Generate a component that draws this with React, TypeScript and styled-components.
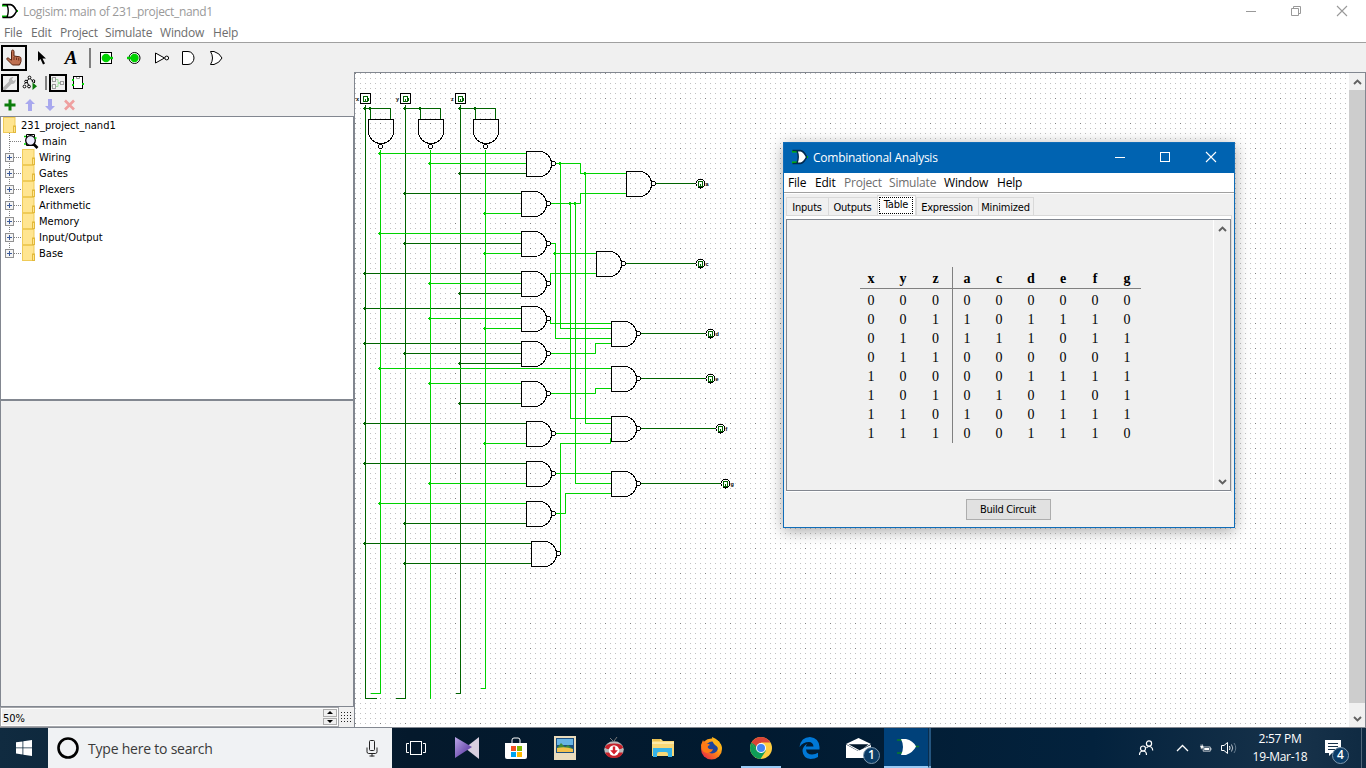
import React from 'react';
import styled, { createGlobalStyle } from 'styled-components';

const GlobalStyle = createGlobalStyle`
  * { box-sizing: border-box; }
  html, body { margin: 0; padding: 0; overflow: hidden; }
  svg { display: block; }
`;

const segoe = `'Open Sans', 'Noto Sans', sans-serif`;
const tahoma = `'DejaVu Sans Condensed', 'DejaVu Sans', sans-serif`;

const ON = '#00d200';
const OFF = '#006400';

/* ---------- main window frame ---------- */

const Screen = styled.div`
  position: relative;
  width: 1366px;
  height: 768px;
  display: flex;
  flex-direction: column;
  background: #fff;
  font-family: ${segoe};
  overflow: hidden;
`;

const TitleBar = styled.header`
  height: 24px;
  display: flex;
  align-items: center;
  background: #fff;
  color: #999;
  font-size: 12px;
  padding: 0 1px 2px 0;
`;

const TitleIcon = styled.span`
  width: 23px;
  padding-left: 1px;
`;

const TitleText = styled.span<{ $spacing: number }>`
  flex: 1;
  letter-spacing: ${(p) => p.$spacing}px;
  white-space: nowrap;
`;

const MenuBar = styled.nav<{ $height: number; $pad: number; $color: string }>`
  height: ${(p) => p.$height}px;
  padding-left: ${(p) => p.$pad}px;
  padding-bottom: 1px;
  display: flex;
  align-items: center;
  background: #fff;
  color: ${(p) => p.$color};
  border-bottom: 1px solid #a0a0a0;
  font-size: 12px;
`;

const MenuItem = styled.span<{ $width: number; $disabled?: boolean; $spacing?: number }>`
  width: ${(p) => p.$width}px;
  white-space: nowrap;
  letter-spacing: ${(p) => p.$spacing ?? -0.2}px;
  color: ${(p) => (p.$disabled ? '#6d6d6d' : 'inherit')};
`;

const ToolBar = styled.div`
  height: 29px;
  display: flex;
  align-items: center;
  background: #f0f0f0;
`;

const ToolSlot = styled.div<{ $size: number; $selected?: boolean; $shift?: number }>`
  width: ${(p) => p.$size}px;
  height: ${(p) => p.$size}px;
  margin-left: ${(p) => p.$shift ?? 0}px;
  display: flex;
  align-items: center;
  justify-content: center;
  position: relative;
  &::before {
    content: '';
    display: ${(p) => (p.$selected ? 'block' : 'none')};
    position: absolute;
    inset: 1px;
    border: 2px solid #000;
  }
`;

const ToolSeparator = styled.div<{ $height: number; $left: number; $right: number }>`
  width: 2px;
  height: ${(p) => p.$height}px;
  margin: 0 ${(p) => p.$right}px 0 ${(p) => p.$left}px;
  background: #808080;
`;

const Body = styled.div`
  height: 655px;
  display: flex;
`;

const Side = styled.aside`
  width: 354px;
  display: flex;
  flex-direction: column;
  background: #f0f0f0;
`;

const SmallBar = styled.div<{ $height: number }>`
  height: ${(p) => p.$height}px;
  display: flex;
  align-items: center;
`;

const TreePane = styled.div`
  height: 286px;
  background: #fff;
  border: 1px solid #828790;
  border-bottom-width: 2px;
`;

const AttributePane = styled.div`
  height: 306px;
  border: 1px solid #828790;
  border-top: 0;
`;

const TreeRow = styled.div<{ $root?: boolean }>`
  height: 16px;
  display: flex;
  align-items: center;
  padding-left: ${(p) => (p.$root ? 2 : 4)}px;
  font-family: ${tahoma};
  font-size: 11px;
  color: #000;
`;

const TreeLabel = styled.span<{ $gap: number }>`
  margin-left: ${(p) => p.$gap}px;
  padding-top: 2px;
  letter-spacing: 0.03px;
  white-space: nowrap;
`;

const ZoomRow = styled.div`
  height: 20px;
  display: flex;
`;

const ZoomField = styled.div`
  width: 339px;
  height: 20px;
  display: flex;
  align-items: center;
  justify-content: space-between;
  border: 1px solid #a4a6aa;
  outline: 1px solid #fff;
  outline-offset: -2px;
  padding: 0 1px 0 2px;
  font-family: ${tahoma};
  font-size: 11px;
`;

const ZoomValue = styled.span`
  padding-top: 2px;
`;

const Spinner = styled.div`
  width: 14px;
  height: 16px;
  display: flex;
  flex-direction: column;
  gap: 1px;
`;

const SpinButton = styled.div`
  flex: 1;
  border: 1px solid #acacac;
  background: #f0f0f0;
  display: flex;
  align-items: center;
  justify-content: center;
`;

const Grip = styled.div`
  margin: 5px 0 0 2px;
  width: 12px;
  height: 12px;
  background: linear-gradient(90deg, #222 1px, transparent 1px) 0 0 / 3px 3px;
  mask: linear-gradient(#000 1px, transparent 1px) 0 0 / 3px 3px;
`;

const CanvasPane = styled.main`
  flex: 1;
  display: flex;
  border: 1px solid #828790;
  border-bottom: 0;
  background: #fff;
`;

const Scroll = styled.div<{ $width: number; $edge?: boolean }>`
  width: ${(p) => p.$width}px;
  display: flex;
  flex-direction: column;
  align-items: stretch;
  justify-content: space-between;
  background: #f0f0f0;
  border-left: ${(p) => (p.$edge ? '1px solid #fff' : '0')};
`;

const ScrollArrow = styled.div`
  height: 17px;
  display: flex;
  align-items: center;
  justify-content: center;
`;

const ScrollThumb = styled.div`
  flex: 1;
  background: #cdcdcd;
  margin-bottom: 7px;
`;

const WindowEdge = styled.div`
  height: 1px;
  background: #828790;
`;

/* ---------- dialog ---------- */

const Dialog = styled.section`
  position: absolute;
  left: 783px;
  top: 142px;
  width: 452px;
  height: 386px;
  display: flex;
  flex-direction: column;
  background: #f0f0f0;
  border: 1px solid #0f6cb8;
  box-shadow: 0 3px 14px rgba(0, 0, 0, 0.36);
`;

const DialogTitle = styled.header`
  height: 30px;
  display: flex;
  align-items: center;
  background: #0063b1;
  color: #fff;
  font-size: 12px;
  padding: 0 0 2px 6px;
`;

const DialogIcon = styled.span`
  width: 23px;
  padding-left: 1px;
`;

const Tabs = styled.div`
  height: 22px;
  padding: 0 0 0 2px;
  display: flex;
  align-items: flex-end;
  border-top: 1px solid #fff;
`;

const Tab = styled.div<{ $width: number; $active?: boolean }>`
  width: ${(p) => p.$width}px;
  height: ${(p) => (p.$active ? 20 : 18)}px;
  display: flex;
  align-items: center;
  justify-content: center;
  font-family: ${tahoma};
  font-size: 11px;
  letter-spacing: -0.2px;
  white-space: nowrap;
  padding-top: ${(p) => (p.$active ? 0 : 2)}px;
  padding-right: 1px;
  background: ${(p) => (p.$active ? '#fff' : '#f0f0f0')};
  border: 1px solid #d9d9d9;
  border-bottom: 0;
  margin-right: ${(p) => (p.$active ? 0 : -1)}px;
`;

const TabFocus = styled.span`
  border: 1px dotted #000;
  width: 34px;
  height: 17px;
  line-height: 14px;
  text-align: center;
`;

const TabBody = styled.div`
  height: 277px;
  margin: 0 2px 0 2px;
  border: 1px solid #d9d9d9;
  border-width: 1px 1px 0 0;
  background: #fff;
  padding: 3px 0 1px 0;
  display: flex;
`;

const TableScroll = styled.div`
  flex: 1;
  display: flex;
  border: 1px solid #828790;
  background: #f0f0f0;
`;

const TruthTable = styled.div`
  flex: 1;
  display: flex;
  align-items: flex-start;
  padding: 47px 0 0 68px;
  font-family: 'Liberation Serif', serif;
  font-size: 14px;
  color: #000;
`;

const TableHalf = styled.div<{ $outputs?: boolean }>`
  display: flex;
  flex-direction: column;
  height: 176px;
  border-left: ${(p) => (p.$outputs ? '1px solid #808080' : '0')};
`;

const TableLine = styled.div<{ $head?: boolean; $outputs?: boolean }>`
  display: grid;
  grid-template-columns: ${(p) => (p.$outputs ? '30px repeat(5, 32px)' : '32px 32px 33px')};
  height: ${(p) => (p.$head ? 21 : 19)}px;
  padding-top: ${(p) => (p.$head ? 2 : 0)}px;
  align-items: center;
  font-weight: ${(p) => (p.$head ? 700 : 400)};
`;

const TableCell = styled.span<{ $nudge?: boolean }>`
  text-align: center;
  padding-right: ${(p) => (p.$nudge ? 2 : 0)}px;
`;

const TableRule = styled.div<{ $outputs?: boolean }>`
  height: 1px;
  background: #808080;
  margin: ${(p) => (p.$outputs ? '0 2px 2px 0' : '0 0 2px 5px')};
`;

const ButtonRow = styled.div`
  flex: 1;
  display: flex;
  align-items: center;
  justify-content: center;
`;

const PushButton = styled.div`
  width: 85px;
  height: 21px;
  border: 1px solid #adadad;
  background: #e1e1e1;
  font-family: ${tahoma};
  font-size: 11px;
  line-height: 19px;
  text-align: center;
  letter-spacing: -0.3px;
  margin: 0 2px 0 0;
`;

/* ---------- taskbar ---------- */

const TaskBar = styled.footer`
  height: 40px;
  display: flex;
  background: linear-gradient(90deg, #102b40 0, #04192c 30%, #011a30 55%, #03223d 80%, #17324a 95%, #0f2a42 100%);
  color: #fff;
`;

const StartButton = styled.div`
  width: 48px;
  display: flex;
  align-items: center;
  justify-content: center;
`;

const SearchBox = styled.div`
  width: 344px;
  display: flex;
  align-items: center;
  background: #f0f2f4;
  color: #3a3a3a;
  font-size: 14px;
  padding: 0 14px 0 8px;
`;

const SearchText = styled.span`
  flex: 1;
  margin-left: 8px;
  letter-spacing: -0.22px;
`;

const TaskView = styled.div`
  width: 50px;
  display: flex;
  align-items: center;
  padding-left: 14px;
`;

const TaskSlot = styled.div<{ $mark?: boolean }>`
  width: 49px;
  display: flex;
  align-items: center;
  justify-content: center;
  position: relative;
  &::after {
    content: '';
    display: ${(p) => (p.$mark ? 'block' : 'none')};
    position: absolute;
    left: 5px;
    right: 4px;
    bottom: 0;
    height: 2px;
    background: #99caf5;
  }
`;

const ActiveTask = styled.div`
  width: 44px;
  margin-left: 1px;
  padding-left: 4px;
  display: flex;
  align-items: center;
  justify-content: center;
  background: #00417a;
  border-bottom: 2px solid #99caf5;
`;

const StackedTask = styled.div`
  width: 3px;
  background: #24557f;
  border-left: 1px solid #0a2d4d;
  border-bottom: 2px solid #7ba8cf;
`;

const Badge = styled.span<{ $left: number; $top: number }>`
  position: absolute;
  left: ${(p) => p.$left}px;
  top: ${(p) => p.$top}px;
  width: 17px;
  height: 17px;
  border-radius: 50%;
  border: 1px solid #7f98ad;
  background: #0c3c66;
  color: #fff;
  font-size: 12px;
  font-weight: 600;
  line-height: 14px;
  text-align: center;
`;

const Tray = styled.div`
  flex: 1;
  display: flex;
  align-items: center;
  justify-content: flex-end;
`;

const TrayIcon = styled.span<{ $width: number }>`
  width: ${(p) => p.$width}px;
  display: flex;
  align-items: center;
  justify-content: center;
  position: relative;
`;

const ActionCenter = styled.span`
  width: 47px;
  padding-left: 11px;
  position: relative;
`;

const Clock = styled.div`
  width: 68px;
  font-size: 12px;
  line-height: 18px;
  text-align: center;
  letter-spacing: -0.3px;
  white-space: nowrap;
`;

const ShowDesktop = styled.div`
  width: 5px;
  height: 40px;
  border-left: 1px solid #51677a;
`;

/* ---------- icons ---------- */

const OrLogo = ({ fill, stroke }: { fill: string; stroke: string }) => (
  <svg width="18" height="16" viewBox="0 0 18 16">
    <path d="M1 2.500h6M1 13.500h6M14 8h3" stroke="#00c000" strokeWidth="1.800" />
    <path d="M1.500 1.500h8c3 .5 4.500 3 6 6.500-1.500 3.500-3 6-6 6.500h-8" fill="none" stroke={stroke} strokeWidth="1.300" />
    <path d="M6 1.800h3.500c3 .5 4.500 3 6 6.200-1.500 3.200-3 5.700-6 6.200H6Q8.500 8 6 1.800z" fill={fill} stroke={stroke} strokeWidth="1.400" />
  </svg>
);

const MinIcon = ({ color }: { color: string }) => (
  <svg width="46" height="12" viewBox="0 0 46 12"><path d="M19 6.500h10" stroke={color} /></svg>
);
const MaxIcon = ({ color }: { color: string }) => (
  <svg width="46" height="12" viewBox="0 0 46 12"><rect x="18.500" y="1.500" width="9" height="9" fill="none" stroke={color} /></svg>
);
const RestoreIcon = ({ color }: { color: string }) => (
  <svg width="46" height="12" viewBox="0 0 46 12"><path d="M18.500 3.500h7v7h-7zM20.500 3v-1.500h7v7h-1.500" fill="none" stroke={color} /></svg>
);
const CloseIcon = ({ color }: { color: string }) => (
  <svg width="46" height="12" viewBox="0 0 46 12"><path d="M18 1l10 10M28 1L18 11" stroke={color} strokeWidth="1.100" /></svg>
);

const PokeIcon = () => (
  <svg width="18" height="18" viewBox="0 0 18 18">
    <path d="M6.500 9V2.500q0-1.500 1.200-1.500t1.300 1.500V7l5.500.8q1.500.3 1.500 1.800v2.900l-1.500 3.500H7.500L2 10.500q-.7-1.500.8-1.600 1 0 2 1.300l1.700 1z" fill="#c07050" stroke="#5a2410" />
    <path d="M9 8v3M11.500 8.500v2.500M13.700 9v2.500" stroke="#5a2410" strokeWidth=".8" />
  </svg>
);
const ArrowIcon = () => (
  <svg width="12" height="16" viewBox="0 0 12 16"><path d="M2 1v10.500l2.500-2.500 2.500 5.500 2-1-2.500-5H10z" fill="#000" /></svg>
);
const TextToolIcon = styled.span`
  font: italic bold 19px 'Liberation Serif', serif;
  color: #000;
  margin-left: 2px;
`;
const InPinIcon = () => (
  <svg width="16" height="14" viewBox="0 0 16 14">
    <rect x="2.500" y="1.500" width="11" height="11" fill="#fff" stroke="#000" />
    <circle cx="8" cy="7" r="4.300" fill={ON} /><path d="M11 7h4" stroke={ON} strokeWidth="2.400" />
  </svg>
);
const OutPinIcon = () => (
  <svg width="16" height="14" viewBox="0 0 16 14">
    <circle cx="8.500" cy="7" r="5.500" fill="#fff" stroke="#000" />
    <circle cx="8.500" cy="7" r="4.200" fill={ON} /><path d="M1 7h4" stroke={ON} strokeWidth="2.400" />
  </svg>
);
const NotIcon = () => (
  <svg width="16" height="14" viewBox="0 0 16 14">
    <path d="M1.500 2v10l9-5z" fill="#fff" stroke="#000" /><circle cx="12.700" cy="7" r="1.900" fill="#fff" stroke="#000" />
  </svg>
);
const AndIcon = () => (
  <svg width="16" height="14" viewBox="0 0 16 14"><path d="M2.500 .5v13H8a6 6.500 0 0 0 0-13z" fill="#fff" stroke="#000" /></svg>
);
const OrIcon = () => (
  <svg width="16" height="14" viewBox="0 0 16 14"><path d="M2.500 .5h3.500Q11.500 2 14 7 11.500 12 6 13.500H2.500Q6.500 7 2.500 .5z" fill="#fff" stroke="#000" /></svg>
);

const WrenchIcon = () => (
  <svg width="14" height="14" viewBox="0 0 14 14">
    <path d="M1.500 12.500L7 7" stroke="#b4b4b4" strokeWidth="3.600" strokeLinecap="round" />
    <path d="M13 3.500l-2.500 1.500-1.700-1.700L10.500 1Q7 .5 6 3.500T8.500 8q3.500.5 4.500-4.500z" fill="#b4b4b4" />
  </svg>
);
const SimTreeIcon = () => (
  <svg width="16" height="16" viewBox="0 0 16 16">
    <path d="M7.500 3L2.500 9M7.500 3L13 8M5 6.500l2 5" stroke="#000" fill="none" />
    <g fill="#fff" stroke="#000"><circle cx="7.500" cy="2.500" r="1.400" /><circle cx="4" cy="6.500" r="1.300" /><circle cx="2.500" cy="11.500" r="1.400" /><circle cx="7" cy="11.500" r="1.400" /><circle cx="11.500" cy="6" r="1.300" /></g>
    <path d="M10.500 7.500v7.500l4.500-3.800z" fill="#0a7a0a" />
  </svg>
);
const LayoutIcon = () => (
  <svg width="14" height="14" viewBox="0 0 14 14">
    <path d="M4 3.500h3v3h2M4 10.500h3v-3h2M11 7h2M0 3h1M0 10h1" stroke="#a0dca0" fill="none" />
    <g fill="#f4f4f4" stroke="#9c9c9c"><rect x="1.500" y="1.500" width="3" height="4" /><rect x="1.500" y="8.500" width="3" height="4" /><rect x="9.500" y="5.500" width="3" height="3" /></g>
  </svg>
);
const AppearanceIcon = () => (
  <svg width="14" height="15" viewBox="0 0 14 15">
    <rect x="2.500" y="1.500" width="9" height="12" fill="#fff" stroke="#000" />
    <path d="M5.500 2v1.500h3V2" stroke="#999" fill="none" />
    <path d="M1 5h2M1 10h2M11 9h2" stroke={ON} strokeWidth="2" />
  </svg>
);
const PlusIcon = () => (
  <svg width="12" height="12" viewBox="0 0 12 12"><path d="M4.500 .5h3v4h4v3h-4v4h-3v-4h-4v-3h4z" fill="#0b7d0b" /></svg>
);
const UpIcon = ({ flip }: { flip?: boolean }) => (
  <svg width="10" height="12" viewBox="0 0 10 12"><path d={flip ? 'M5 12L0 7h3V0h4v7h3z' : 'M5 0L0 5h3v7h4V5h3z'} fill="#a8a8ee" /></svg>
);
const CrossIcon = () => (
  <svg width="12" height="12" viewBox="0 0 12 12"><path d="M1 1.500l9 9M10 1.500l-9 9" stroke="#efa0a0" strokeWidth="2.600" /></svg>
);

const FolderIcon = () => (
  <svg width="14" height="16" viewBox="0 0 14 16">
    <rect x=".5" y=".5" width="11.500" height="15" fill="#ffe591" stroke="#efcb58" />
    <rect x="10.500" y="9" width="2" height="6.500" fill="#ffe591" stroke="#e2b93c" />
  </svg>
);
const CircuitIcon = () => (
  <svg width="17" height="16" viewBox="-1 0 17 16">
    <path d="M3.500 1.500h8v11h-8z" fill="#fff" stroke="#000" />
    <circle cx="7.500" cy="7.500" r="4.800" fill="#ecebff" stroke="#000" strokeWidth="1.300" />
    <path d="M10.500 11l4 4" stroke="#000" strokeWidth="2.600" />
    <path d="M1 3.500h2M1 11h2M11.500 5h2" stroke={ON} strokeWidth="1.500" />
  </svg>
);
const TreeBranch = ({ leaf, last }: { leaf?: boolean; last?: boolean }) => (
  <svg width="17" height="16" viewBox="0 0 17 16" shapeRendering="crispEdges">
    <path d={last ? 'M4.500 0v8' : 'M4.500 0v16'} stroke="#808080" strokeDasharray="1 1" />
    <path d="M5 8.500h11" stroke="#808080" strokeDasharray="1 1" />
    {!leaf && <><rect x=".5" y="4.500" width="8" height="8" fill="#f4f4f4" stroke="#919191" /><path d="M2 8.500h5M4.500 6v5" stroke="#3b5a9a" /></>}
  </svg>
);

const Chevron = ({ up }: { up?: boolean }) => (
  <svg width="9" height="6" viewBox="0 0 9 6"><path d={up ? 'M1 5l3.500-3.500L8 5' : 'M1 1l3.500 3.500L8 1'} fill="none" stroke="#606060" strokeWidth="1.900" /></svg>
);
const Caret = ({ up }: { up?: boolean }) => (
  <svg width="6" height="3" viewBox="0 0 6 3"><path d={up ? 'M0 3l3-3 3 3z' : 'M0 0l3 3 3-3z'} fill="#000" /></svg>
);

/* ---------- circuit ---------- */

const firstGates: [number, number][] = [
  [526, 163], [521, 203], [521, 243], [521, 283], [521, 318], [521, 353],
  [521, 393], [526, 433], [526, 473], [526, 513], [531, 553],
];
const secondGates: [number, number][] = [[626, 183], [596, 263], [611, 333], [611, 378], [611, 428], [611, 483]];

// bus x, gate x, y, high level
const taps: [number, number, number, boolean][] = [
  [380, 526, 153, true], [430, 526, 163, true], [460, 526, 173, false],
  [405, 521, 193, false], [485, 521, 213, true],
  [380, 521, 233, true], [405, 521, 243, false], [485, 521, 253, true],
  [365, 521, 273, false], [430, 521, 283, true], [460, 521, 293, false],
  [365, 521, 308, false], [430, 521, 318, true], [485, 521, 328, true],
  [365, 521, 343, false], [405, 521, 353, false], [460, 521, 363, false],
  [380, 611, 368, true], [430, 521, 383, true], [460, 521, 403, false],
  [365, 526, 423, false], [485, 526, 443, true],
  [365, 526, 463, false], [430, 526, 483, true],
  [380, 526, 503, true], [405, 526, 523, false],
  [365, 531, 543, false], [405, 531, 563, false],
];
const highWires = [
  'M380 149V693H370', 'M430 149V698', 'M485 149V688H480',
  'M554 163H580V173H626', 'M549 203H580V193H626', 'M560 163V328H611', 'M585 173V423H611',
  'M570 203V418H611', 'M575 203V483H611', 'M549 243H555V338H611', 'M555 253H596',
  'M550 283V273H596', 'M550 318V323H611', 'M549 353H595V343H611', 'M549 393H595V388H611',
  'M554 433H611', 'M554 473H611', 'M554 513H565V493H611', 'M560 553V443H610V438H609',
];
const lowWires = [
  'M365 104V698H376', 'M405 104V698H395', 'M460 104V693H455',
  'M365 108H390V119M370 108V119', 'M405 108H440V119M420 108V119', 'M460 108H495V119M475 108V119',
  'M654 183H696', 'M624 263H696', 'M639 333H706', 'M639 378H706', 'M639 428H716', 'M639 483H721',
];
const nodes: [number, number, boolean][] = [
  [560, 163, true], [585, 173, true], [570, 203, true], [575, 203, true], [555, 253, true],
  [365, 108, false], [370, 108, false], [405, 108, false], [420, 108, false], [460, 108, false], [475, 108, false],
  ...taps.map(([x, , y, h]) => [x, y, h] as [number, number, boolean]),
];
const inputPins: [number, string][] = [[365, 'x'], [405, 'y'], [460, 'z']];
const outputPins: [number, number, string][] = [
  [700, 183, 'a'], [700, 263, 'c'], [710, 333, 'd'], [710, 378, 'e'], [720, 428, 'f'], [725, 483, 'g'],
];

const PinLabel = styled.text`
  font: bold 5.5px 'Liberation Sans', sans-serif;
  fill: #000;
`;

const Circuit = () => (
  <svg width="994" height="654" viewBox="355 73 994 654">
    <defs>
      <pattern id="minor" x="355" y="73" width="5" height="5" patternUnits="userSpaceOnUse"><rect width="1" height="1" fill="#c0c0c0" /></pattern>
      <pattern id="major" x="355" y="73" width="25" height="25" patternUnits="userSpaceOnUse"><rect width="1" height="1" fill="#808080" /></pattern>
    </defs>
    <rect x="355" y="73" width="994" height="654" fill="#fff" />
    <rect x="355" y="73" width="994" height="654" fill="url(#minor)" />
    <rect x="355" y="73" width="994" height="654" fill="url(#major)" />
    <g transform="translate(.5 .5)" fill="none" shapeRendering="crispEdges">
      <g stroke={OFF}>
        {lowWires.map((d) => <path key={d} d={d} />)}
        {taps.filter((t) => !t[3]).map(([x, g, y]) => <path key={`${x}-${y}`} d={`M${x} ${y}H${g}`} />)}
      </g>
      <g stroke={ON}>
        {highWires.map((d) => <path key={d} d={d} />)}
        {taps.filter((t) => t[3]).map(([x, g, y]) => <path key={`${x}-${y}`} d={`M${x} ${y}H${g}`} />)}
      </g>
    </g>
    <g shapeRendering="crispEdges">
      {nodes.map(([x, y, h]) => <path key={`${x}-${y}`} d={`M${x - 1} ${y - 1}h2v3h-2zM${x - 2} ${y}h4v1h-4z`} fill={h ? ON : OFF} />)}
    </g>
    <g transform="translate(.5 .5)" fill="none" shapeRendering="crispEdges">
      {[...firstGates, ...secondGates].map(([x, y]) => (
        <g key={`${x}-${y}`} transform={`translate(${x} ${y})`} stroke="#000">
          <path d="M0-12H13A12 12.500 0 0 1 13 13H0Z" />
          <circle cx="27" cy="0" r="2" />
        </g>
      ))}
      {[380, 430, 485].map((x) => (
        <g key={x} transform={`translate(${x} 119)`} stroke="#000">
          <path d="M-12 0H13V12A12.500 12 0 0 1-12 12Z" />
          <circle cx="0" cy="27" r="2" />
        </g>
      ))}
      {inputPins.map(([x]) => (
        <g key={x}>
          <rect x={x - 5} y="93" width="10" height="10" fill="#fff" stroke="#000" />
          <path d={`M${x - 2} 96h4v5h-4zM${x} 98v2M${x + 3} 97v3`} stroke={OFF} />
        </g>
      ))}
      {outputPins.map(([x, y]) => (
        <g key={`${x}-${y}`}>
          <circle cx={x} cy={y} r="4.500" fill="#fff" stroke="#000" />
          <path d={`M${x - 2} ${y - 2}h4v5h-4zM${x} ${y}v2`} stroke={OFF} />
        </g>
      ))}
    </g>
    {inputPins.map(([x, l]) => <PinLabel key={l} x={x - 9} y="101">{l}</PinLabel>)}
    {outputPins.map(([x, y, l]) => <PinLabel key={l} x={x + 5.500} y={y + 3}>{l}</PinLabel>)}
  </svg>
);

/* ---------- taskbar icons ---------- */

const WindowsLogo = () => (
  <svg width="16" height="16" viewBox="0 0 16 16" fill="#fff"><path d="M0 2.300L6.500 1.400v6.100H0zM7.300 1.300L16 0v7.500H7.300zM0 8.300h6.500v6.200L0 13.600zM7.300 8.300H16V16l-8.700-1.300z" /></svg>
);
const MicIcon = () => (
  <svg width="12" height="17" viewBox="0 0 12 17" fill="none" stroke="#222"><rect x="3.500" y=".5" width="5" height="10" rx="1" /><path d="M1 7.500v4.300q0 1.700 1.700 1.700h6.600q1.700 0 1.700-1.700V7.500M6 13.500v3M3.500 16h5" /></svg>
);
const CortanaIcon = () => (
  <svg width="24" height="24" viewBox="0 0 24 24"><circle cx="12" cy="12" r="9.500" fill="none" stroke="#000" strokeWidth="2.600" /></svg>
);
const TaskViewIcon = () => (
  <svg width="21" height="14" viewBox="0 0 21 14" fill="none" stroke="#fff"><rect x="4.500" y=".5" width="11" height="13" /><path d="M3 2.500H.5v9H3M17 2.500h2.500v9H17" /></svg>
);
const PlayerIcon = () => (
  <svg width="24" height="22" viewBox="0 0 24 22">
    <defs><linearGradient id="km" x1="0" y1="0" x2="1" y2="1"><stop offset="0" stopColor="#bba8e8" /><stop offset="1" stopColor="#4a2596" /></linearGradient></defs>
    <path d="M24 0v22L10 11z" fill="#d8cfdf" /><path d="M0 0l17 10L0 21z" fill="url(#km)" />
  </svg>
);
const StoreIcon = () => (
  <svg width="24" height="24" viewBox="0 0 24 24">
    <path d="M8 7V4q0-2 2-2h4q2 0 2 2v3" fill="none" stroke="#fff" /><path d="M1 7h22v14q0 2-2 2H3q-2 0-2-2z" fill="#fff" />
    <path d="M7 10h5v5H7z" fill="#f25022" /><path d="M13 10h5v5h-5z" fill="#7fba00" /><path d="M7 16h5v5H7z" fill="#00a4ef" /><path d="M13 16h5v5h-5z" fill="#ffb900" />
  </svg>
);
const PictureIcon = () => (
  <svg width="22" height="24" viewBox="0 0 22 24">
    <rect width="22" height="24" fill="#eadcbc" /><rect x="2" y="2" width="18" height="15" fill="#1c4f80" /><rect x="3" y="3" width="16" height="6" fill="#68b4e4" />
    <path d="M3 12l4-5 4 4 3-2 5 4v3H3z" fill="#3f8a3c" /><path d="M3 12q8-2 16 1v3H3z" fill="#f2c14c" />
  </svg>
);
const DownloaderIcon = () => (
  <svg width="20" height="22" viewBox="0 0 20 22">
    <path d="M6 1l3 3M13 0l-3 4" stroke="#777" />
    <ellipse cx="10" cy="12.500" rx="9.800" ry="8.300" fill="#b9b9bb" />
    <path d="M.8 10.500Q2 6.500 10 6.500t9.200 4L17 12H3z" fill="#c5222b" />
    <path d="M1 15.500h18Q17 21 10 21T1 15.500z" fill="#c5222b" />
    <circle cx="10" cy="13.500" r="5.200" fill="#fff" /><path d="M8.800 9.500h2.400v3.700h2.600L10 17.500l-3.800-4.300h2.600z" fill="#d41f2c" />
  </svg>
);
const ExplorerIcon = () => (
  <svg width="22" height="20" viewBox="0 0 22 20">
    <path d="M0 1h9l2 2h11v15H0z" fill="#f8d776" /><path d="M0 4h22v2H0z" fill="#fce9a8" /><path d="M1 2h7" stroke="#d9a62a" />
    <path d="M1 10h19v9h-4v-3q0-2-2-2H7q-2 0-2 2v3H1z" fill="#35b2e8" />
  </svg>
);
const FirefoxIcon = () => (
  <svg width="23" height="23" viewBox="0 0 23 23">
    <defs><linearGradient id="ff" x1="1" y1="0" x2="0" y2="1"><stop offset="0" stopColor="#ffe226" /><stop offset=".45" stopColor="#ff8a16" /><stop offset="1" stopColor="#e3164f" /></linearGradient></defs>
    <circle cx="11.500" cy="12" r="10.500" fill="url(#ff)" /><circle cx="12" cy="10.500" r="6" fill="#20449c" />
    <path d="M12 0q8 3 10 11l-4 4q1-5-3-7-3-3-3-8z" fill="#ffb31a" /><path d="M1 8l2-5 2 4q4-1 5 1-3 1-2 3 2 2 5 1-1 4-6 4-6-1-6-8z" fill="#ff7a16" />
  </svg>
);
const ChromeIcon = () => (
  <svg width="22" height="22" viewBox="0 0 22 22">
    <circle cx="11" cy="11" r="11" fill="#ffcd40" /><path d="M11 11L1.500 5.500A11 11 0 0 1 20.500 5.500H11z" fill="#db4437" /><path d="M1.500 5.500A11 11 0 0 0 10.500 22L16 13.500 6 13z" fill="#0f9d58" />
    <path d="M1.500 5.500L6.500 13.500 11 11V5.500z" fill="#db4437" /><path d="M1.500 5.500L6.300 13.700 8 12 5 8z" fill="#0f9d58" />
    <circle cx="11" cy="11" r="5" fill="#fff" /><circle cx="11" cy="11" r="4" fill="#4285f4" />
  </svg>
);
const EdgeIcon = () => (
  <svg width="21" height="22" viewBox="0 0 21 22"><path d="M.5 10Q2 0 11 0q9 1 9.500 10v2.500H7q.5 5 6 5 3.500 0 6-1.700V20q-3 2-7.500 2Q4 21 3.500 14q.2-5 5-7.500Q7 8 6.800 9.500h7.700Q14 5 10 5 4 5 .5 10z" fill="#0078d7" /></svg>
);
const MailIcon = () => (
  <svg width="25" height="20" viewBox="0 0 25 20"><path d="M0 6L12.500 0 25 6l-12.500 7z" fill="#fff" /><path d="M2.500 6.200h20l-8 6.500z" fill="#04192c" /><path d="M0 6.500L12 13l13-6v13H0z" fill="#fff" /></svg>
);
const TaskGateIcon = () => (
  <svg width="23" height="18" viewBox="0 0 23 18"><path d="M0 2h5M0 15h5M18 8.500h4" stroke="#0a7c28" strokeWidth="1.500" /><path d="M4 1h5q7 1.500 10 7.500-3 6-10 8.500H4Q8 9 4 1z" fill="#fff" /></svg>
);
const PeopleIcon = () => (
  <svg width="16" height="16" viewBox="0 0 16 16" fill="none" stroke="#fff" strokeWidth="1.200"><circle cx="11" cy="3.500" r="2.600" /><circle cx="5" cy="8.500" r="2.500" /><path d="M1.500 15q0-4 3.500-4t3.500 4M8.500 8q1-1.500 2.500-1.500 3.500 0 3.700 4" /></svg>
);
const TrayChevron = () => (
  <svg width="13" height="8" viewBox="0 0 13 8"><path d="M1 7l5.500-5.500L12 7" fill="none" stroke="#fff" strokeWidth="1.300" /></svg>
);
const BatteryIcon = () => (
  <svg width="17" height="12" viewBox="0 0 17 12"><path d="M4.500 4.500h10v6h-10z" fill="none" stroke="#fff" /><path d="M6 6h7v3H6z" fill="#fff" /><path d="M15.500 6v3M1.500 1v2M3.500 1v2M1 3.500h4M3 4v3h-2" stroke="#fff" /><path d="M.5 3h4v2l-1.500 1h-1L.5 5z" fill="#fff" /></svg>
);
const VolumeIcon = () => (
  <svg width="17" height="14" viewBox="0 0 17 14" fill="none" stroke="#fff"><path d="M.5 4.500h2.500L6.500 1.500v11L3 9.500H.5z" /><path d="M8.500 5q1 2 0 4" /><path d="M10.500 3.500q2.500 3.500 0 7" stroke="#b8c2cc" /><path d="M13 2q3.500 5 0 10" stroke="#62788b" /></svg>
);
const ActionIcon = () => (
  <svg width="16" height="16" viewBox="0 0 16 16"><path d="M0 0h16v13H7l-3 3v-3H0z" fill="#fff" /><path d="M3 3.500h10M3 6.500h10M3 9.500h7" stroke="#17324a" /></svg>
);

/* ---------- content ---------- */

const rows = [
  '000000000', '001101110', '010111011', '011000001',
  '100001111', '101010101', '110100111', '111001110',
];
const libraries = ['Wiring', 'Gates', 'Plexers', 'Arithmetic', 'Memory', 'Input/Output', 'Base'];

const TableBlock = ({ names, from, to, outputs }: { names: string[]; from: number; to: number; outputs?: boolean }) => (
  <TableHalf $outputs={outputs}>
    <TableLine $head $outputs={outputs}>
      {names.map((n, i) => <TableCell key={n} $nudge={outputs && i === 0}>{n}</TableCell>)}
    </TableLine>
    <TableRule $outputs={outputs} />
    {rows.map((r) => (
      <TableLine key={r} $outputs={outputs}>
        {r.slice(from, to).split('').map((v, i) => <TableCell key={i} $nudge={outputs && i === 0}>{v}</TableCell>)}
      </TableLine>
    ))}
  </TableHalf>
);

export default function App() {
  return (
    <Screen>
      <GlobalStyle />
      <TitleBar>
        <TitleIcon><OrLogo fill="#fff" stroke="#000" /></TitleIcon>
        <TitleText $spacing={-0.32}>Logisim: main of 231_project_nand1</TitleText>
        <MinIcon color="#999" /><RestoreIcon color="#999" /><CloseIcon color="#999" />
      </TitleBar>
      <MenuBar $height={19} $pad={4} $color="#6d6d6d">
        <MenuItem $width={27}>File</MenuItem>
        <MenuItem $width={29}>Edit</MenuItem>
        <MenuItem $width={45}>Project</MenuItem>
        <MenuItem $width={55}>Simulate</MenuItem>
        <MenuItem $width={53}>Window</MenuItem>
        <MenuItem $width={30}>Help</MenuItem>
      </MenuBar>
      <ToolBar>
        <ToolSlot $size={28} $selected><PokeIcon /></ToolSlot>
        <ToolSlot $size={28}><ArrowIcon /></ToolSlot>
        <ToolSlot $size={28}><TextToolIcon>A</TextToolIcon></ToolSlot>
        <ToolSeparator $height={20} $left={5} $right={1} />
        <ToolSlot $size={28}><InPinIcon /></ToolSlot>
        <ToolSlot $size={28}><OutPinIcon /></ToolSlot>
        <ToolSlot $size={28}><NotIcon /></ToolSlot>
        <ToolSlot $size={28} $shift={-2}><AndIcon /></ToolSlot>
        <ToolSlot $size={28}><OrIcon /></ToolSlot>
      </ToolBar>
      <Body>
        <Side>
          <SmallBar $height={22}>
            <ToolSlot $size={20} $selected><WrenchIcon /></ToolSlot>
            <ToolSlot $size={20}><SimTreeIcon /></ToolSlot>
            <ToolSeparator $height={14} $left={5} $right={1} />
            <ToolSlot $size={20} $selected><LayoutIcon /></ToolSlot>
            <ToolSlot $size={20}><AppearanceIcon /></ToolSlot>
          </SmallBar>
          <SmallBar $height={22}>
            <ToolSlot $size={20}><PlusIcon /></ToolSlot>
            <ToolSlot $size={20}><UpIcon /></ToolSlot>
            <ToolSlot $size={20}><UpIcon flip /></ToolSlot>
            <ToolSlot $size={20}><CrossIcon /></ToolSlot>
          </SmallBar>
          <TreePane>
            <TreeRow $root><FolderIcon /><TreeLabel $gap={4}>231_project_nand1</TreeLabel></TreeRow>
            <TreeRow><TreeBranch leaf /><CircuitIcon /><TreeLabel $gap={3}>main</TreeLabel></TreeRow>
            {libraries.map((name, i) => (
              <TreeRow key={name}>
                <TreeBranch last={i === libraries.length - 1} /><FolderIcon /><TreeLabel $gap={3}>{name}</TreeLabel>
              </TreeRow>
            ))}
          </TreePane>
          <AttributePane />
          <ZoomRow>
            <ZoomField>
              <ZoomValue>50%</ZoomValue>
              <Spinner><SpinButton><Caret up /></SpinButton><SpinButton><Caret /></SpinButton></Spinner>
            </ZoomField>
            <Grip />
          </ZoomRow>
        </Side>
        <CanvasPane>
          <Circuit />
          <Scroll $width={16}>
            <ScrollArrow><Chevron up /></ScrollArrow>
            <ScrollThumb />
            <ScrollArrow><Chevron /></ScrollArrow>
          </Scroll>
        </CanvasPane>
      </Body>
      <WindowEdge />
      <TaskBar>
        <StartButton><WindowsLogo /></StartButton>
        <SearchBox><CortanaIcon /><SearchText>Type here to search</SearchText><MicIcon /></SearchBox>
        <TaskView><TaskViewIcon /></TaskView>
        <TaskSlot><PlayerIcon /></TaskSlot>
        <TaskSlot><StoreIcon /></TaskSlot>
        <TaskSlot><PictureIcon /></TaskSlot>
        <TaskSlot><DownloaderIcon /></TaskSlot>
        <TaskSlot><ExplorerIcon /></TaskSlot>
        <TaskSlot><FirefoxIcon /></TaskSlot>
        <TaskSlot $mark><ChromeIcon /></TaskSlot>
        <TaskSlot><EdgeIcon /></TaskSlot>
        <TaskSlot><MailIcon /><Badge $left={29} $top={19}>1</Badge></TaskSlot>
        <ActiveTask><TaskGateIcon /></ActiveTask>
        <StackedTask />
        <Tray>
          <TrayIcon $width={36}><PeopleIcon /></TrayIcon>
          <TrayIcon $width={36}><TrayChevron /></TrayIcon>
          <TrayIcon $width={12}><BatteryIcon /></TrayIcon>
          <TrayIcon $width={34}><VolumeIcon /></TrayIcon>
          <Clock>2:57 PM<br />19-Mar-18</Clock>
          <ActionCenter><ActionIcon /><Badge $left={18} $top={7}>4</Badge></ActionCenter>
          <ShowDesktop />
        </Tray>
      </TaskBar>

      <Dialog>
        <DialogTitle>
          <DialogIcon><OrLogo fill="#fff" stroke="#002a50" /></DialogIcon>
          <TitleText $spacing={-0.25}>Combinational Analysis</TitleText>
          <MinIcon color="#fff" /><MaxIcon color="#fff" /><CloseIcon color="#fff" />
        </DialogTitle>
        <MenuBar $height={20} $pad={4} $color="#000">
          <MenuItem $width={27}>File</MenuItem>
          <MenuItem $width={29}>Edit</MenuItem>
          <MenuItem $width={45} $disabled>Project</MenuItem>
          <MenuItem $width={55} $disabled>Simulate</MenuItem>
          <MenuItem $width={53}>Window</MenuItem>
          <MenuItem $width={30}>Help</MenuItem>
        </MenuBar>
        <Tabs>
          <Tab $width={43}>Inputs</Tab>
          <Tab $width={50}>Outputs</Tab>
          <Tab $width={39} $active><TabFocus>Table</TabFocus></Tab>
          <Tab $width={63}>Expression</Tab>
          <Tab $width={56}>Minimized</Tab>
        </Tabs>
        <TabBody>
          <TableScroll>
            <TruthTable>
              <TableBlock names={['x', 'y', 'z']} from={0} to={3} />
              <TableBlock names={['a', 'c', 'd', 'e', 'f', 'g']} from={3} to={9} outputs />
            </TruthTable>
            <Scroll $width={17} $edge>
              <ScrollArrow><Chevron up /></ScrollArrow>
              <ScrollArrow><Chevron /></ScrollArrow>
            </Scroll>
          </TableScroll>
        </TabBody>
        <ButtonRow><PushButton>Build Circuit</PushButton></ButtonRow>
      </Dialog>
    </Screen>
  );
}
